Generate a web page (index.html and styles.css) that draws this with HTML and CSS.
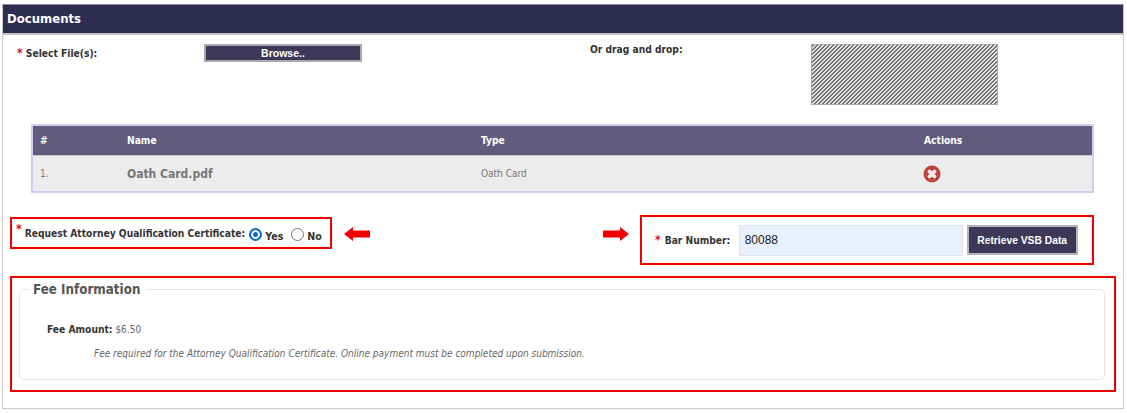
FILE: index.html
```html
<!DOCTYPE html>
<html lang="en">

<head>
  <meta charset="UTF-8">
  <meta name="viewport" content="width=device-width, initial-scale=1.0">
  <title>Documents</title>
  <link rel="stylesheet" href="styles.css">
</head>

<body>
  <div class="panel">
    <div class="panel-head">Documents</div>

    <div class="upload-row">
      <div class="label select-label"><span class="req">*</span> Select File(s):</div>
      <button class="browse-button" type="button">Browse..</button>
      <div class="label drag-label">Or drag and drop:</div>
      <div class="drop-zone"></div>
    </div>

    <table class="file-table">
      <thead>
        <tr>
          <th class="col-num">#</th>
          <th class="col-name">Name</th>
          <th class="col-type">Type</th>
          <th>Actions</th>
        </tr>
      </thead>
      <tbody>
        <tr>
          <td class="row-num">1.</td>
          <td class="file-name">Oath Card.pdf</td>
          <td>Oath Card</td>
          <td>
            <svg class="remove-icon" width="18" height="18" viewBox="0 0 18 18">
              <circle cx="9" cy="9" r="8.5" fill="#bc423c" />
              <path d="M6.5 6.5 L11.5 11.5 M11.5 6.5 L6.5 11.5" stroke="#f2eded" stroke-width="3.8" stroke-linecap="round" />
            </svg>
          </td>
        </tr>
      </tbody>
    </table>

    <div class="request-row">
      <div class="callout cert-box">
        <span class="req req-high">*</span>
        <span class="label">Request Attorney Qualification Certificate:</span>
        <span class="radio radio-on"></span><span class="label option option-yes">Yes</span>
        <span class="radio"></span><span class="label option">No</span>
      </div>
      <svg class="arrow arrow-left" width="26" height="14" viewBox="0 0 26 14">
        <path d="M0 7 L9 0 V3.5 H26 V10.5 H9 V14 Z" fill="#f00000" />
      </svg>
      <svg class="arrow arrow-right" width="26" height="14" viewBox="0 0 26 14">
        <path d="M26 7 L17 0 V3.5 H0 V10.5 H17 V14 Z" fill="#f00000" />
      </svg>
      <div class="callout bar-box">
        <span class="req">*</span>
        <span class="label bar-label">Bar Number:</span>
        <input class="bar-input" type="text" value="80088">
        <button class="retrieve-button" type="button">Retrieve VSB Data</button>
      </div>
    </div>

    <div class="callout fee-box">
      <fieldset class="fee-set">
        <legend>Fee Information</legend>
        <p class="fee-amount"><span class="label">Fee Amount:</span> $6.50</p>
        <p class="fee-note">Fee required for the Attorney Qualification Certificate. Online payment must be completed upon submission.</p>
      </fieldset>
    </div>
  </div>
</body>

</html>
```

FILE: styles.css
```css
body {
  font-family: "DejaVu Sans", Verdana, sans-serif;
  font-stretch: condensed;
  font-size: 10px;
  color: #666;
  background-color: white;
  margin: 0;
}

.panel {
  box-sizing: border-box;
  width: 1122px;
  height: 405px;
  margin: 4px 0 0 2px;
  border: 1px solid #c9c9c9;
  border-top-color: #8d8ca3;
}

.panel-head {
  box-sizing: border-box;
  height: 30px;
  padding: 6px 0 0 4px;
  background-color: #2e2d4f;
  border-bottom: 2px solid #c4c4c8;
  color: white;
  font-size: 13px;
  font-weight: bold;
}

.label {
  font-size: 10.2px;
  font-weight: bold;
  color: #333;
}

.req {
  color: #e01010;
  font-weight: bold;
  font-size: 12px;
}

.req-high {
  align-self: flex-start;
  margin-top: 3px;
}

.upload-row {
  display: flex;
  align-items: flex-start;
  height: 89px;
  padding-top: 9px;
  box-sizing: border-box;
}

.select-label {
  width: 187px;
  margin: 2px 0 0 14px;
}

.browse-button {
  width: 158px;
  height: 18px;
  padding: 0;
  background-color: #3d3857;
  border: 2px solid #a9a9ad;
  color: white;
  font-family: "Liberation Sans", Arial, sans-serif;
  font-size: 10.5px;
  font-weight: bold;
}

.drag-label {
  width: 221px;
  margin-left: 228px;
}

.drop-zone {
  width: 187px;
  height: 61px;
  box-sizing: border-box;
  border: 1px solid #a8a8a8;
  background-image: linear-gradient(135deg, #707070 25%, #e6e6e6 25%, #e6e6e6 50%, #707070 50%, #707070 75%, #e6e6e6 75%);
  background-size: 4px 4px;
}

.file-table {
  width: 1063px;
  height: 69px;
  margin-left: 28px;
  border-collapse: collapse;
  border: 2px solid #cfcff5;
  table-layout: fixed;
}

.file-table th {
  height: 29px;
  padding: 0 0 0 8px;
  background-color: #615c7d;
  border-bottom: 1px solid #c4c4c8;
  color: white;
  text-align: left;
  font-size: 10.2px;
}

.file-table td {
  padding: 0 0 0 8px;
  background-color: #ececec;
  color: #777;
}

.file-table .col-num {
  width: 79px;
  padding-left: 7px;
}

.file-table .row-num {
  padding-left: 7px;
}

.col-name {
  width: 346px;
}

.col-type {
  width: 435px;
}

.file-name {
  font-size: 12px;
  font-weight: bold;
}

.remove-icon {
  display: block;
  margin-left: -1px;
}

.request-row {
  display: flex;
  align-items: flex-start;
  height: 83px;
  padding-top: 22px;
  box-sizing: border-box;
}

.callout {
  border: 2px solid #f00000;
  box-sizing: border-box;
}

.cert-box {
  display: flex;
  align-items: center;
  gap: 3px;
  width: 322px;
  height: 32px;
  margin: 2px 0 0 7px;
  padding: 0 0 0 4px;
}

.radio {
  box-sizing: border-box;
  width: 13px;
  height: 13px;
  margin: 3px 0 0 3px;
  border: 1px solid #777;
  border-radius: 50%;
  background-color: white;
}

.radio-on {
  margin-left: 1px;
  border: 2px solid #0a6fd0;
  box-shadow: inset 0 0 0 2px white;
  background-color: #0a6fd0;
}

.option {
  margin-top: 5px;
  font-size: 10.6px;
}

.option-yes {
  margin-right: 2px;
}

.arrow {
  margin-top: 12px;
}

.arrow-left {
  margin-left: 12px;
}

.arrow-right {
  margin-left: 233px;
}

.bar-box {
  display: flex;
  align-items: center;
  width: 454px;
  height: 50px;
  margin-left: 11px;
  padding-left: 13px;
}

.bar-label {
  width: 74px;
  margin-left: 4px;
}

.bar-input {
  box-sizing: border-box;
  width: 224px;
  height: 31px;
  padding: 0 5px;
  background-color: #e8f0fc;
  border: 1px solid #dde2ea;
  color: #222;
  font-family: "Liberation Sans", Arial, sans-serif;
  font-size: 12px;
}

.retrieve-button {
  box-sizing: border-box;
  width: 111px;
  height: 30px;
  margin-left: 4px;
  padding: 0;
  background-color: #3d3857;
  border: 2px solid #b5b5b8;
  color: white;
  font-family: "Liberation Sans", Arial, sans-serif;
  font-size: 10.3px;
  font-weight: bold;
}

.fee-box {
  width: 1106px;
  height: 116px;
  margin-left: 7px;
  padding: 4px 9px 0 7px;
}

.fee-set {
  box-sizing: border-box;
  height: 98px;
  margin: 0;
  padding: 0;
  border: 1px solid #e6e6e6;
  border-radius: 5px;
}

.fee-set legend {
  margin-left: 10px;
  padding: 0 6px 0 3px;
  color: #555;
  font-size: 13.3px;
  font-weight: bold;
}

.fee-amount {
  margin: 27px 0 0 27px;
}

.fee-note {
  margin: 13px 0 0 74px;
  font-style: italic;
}
```
